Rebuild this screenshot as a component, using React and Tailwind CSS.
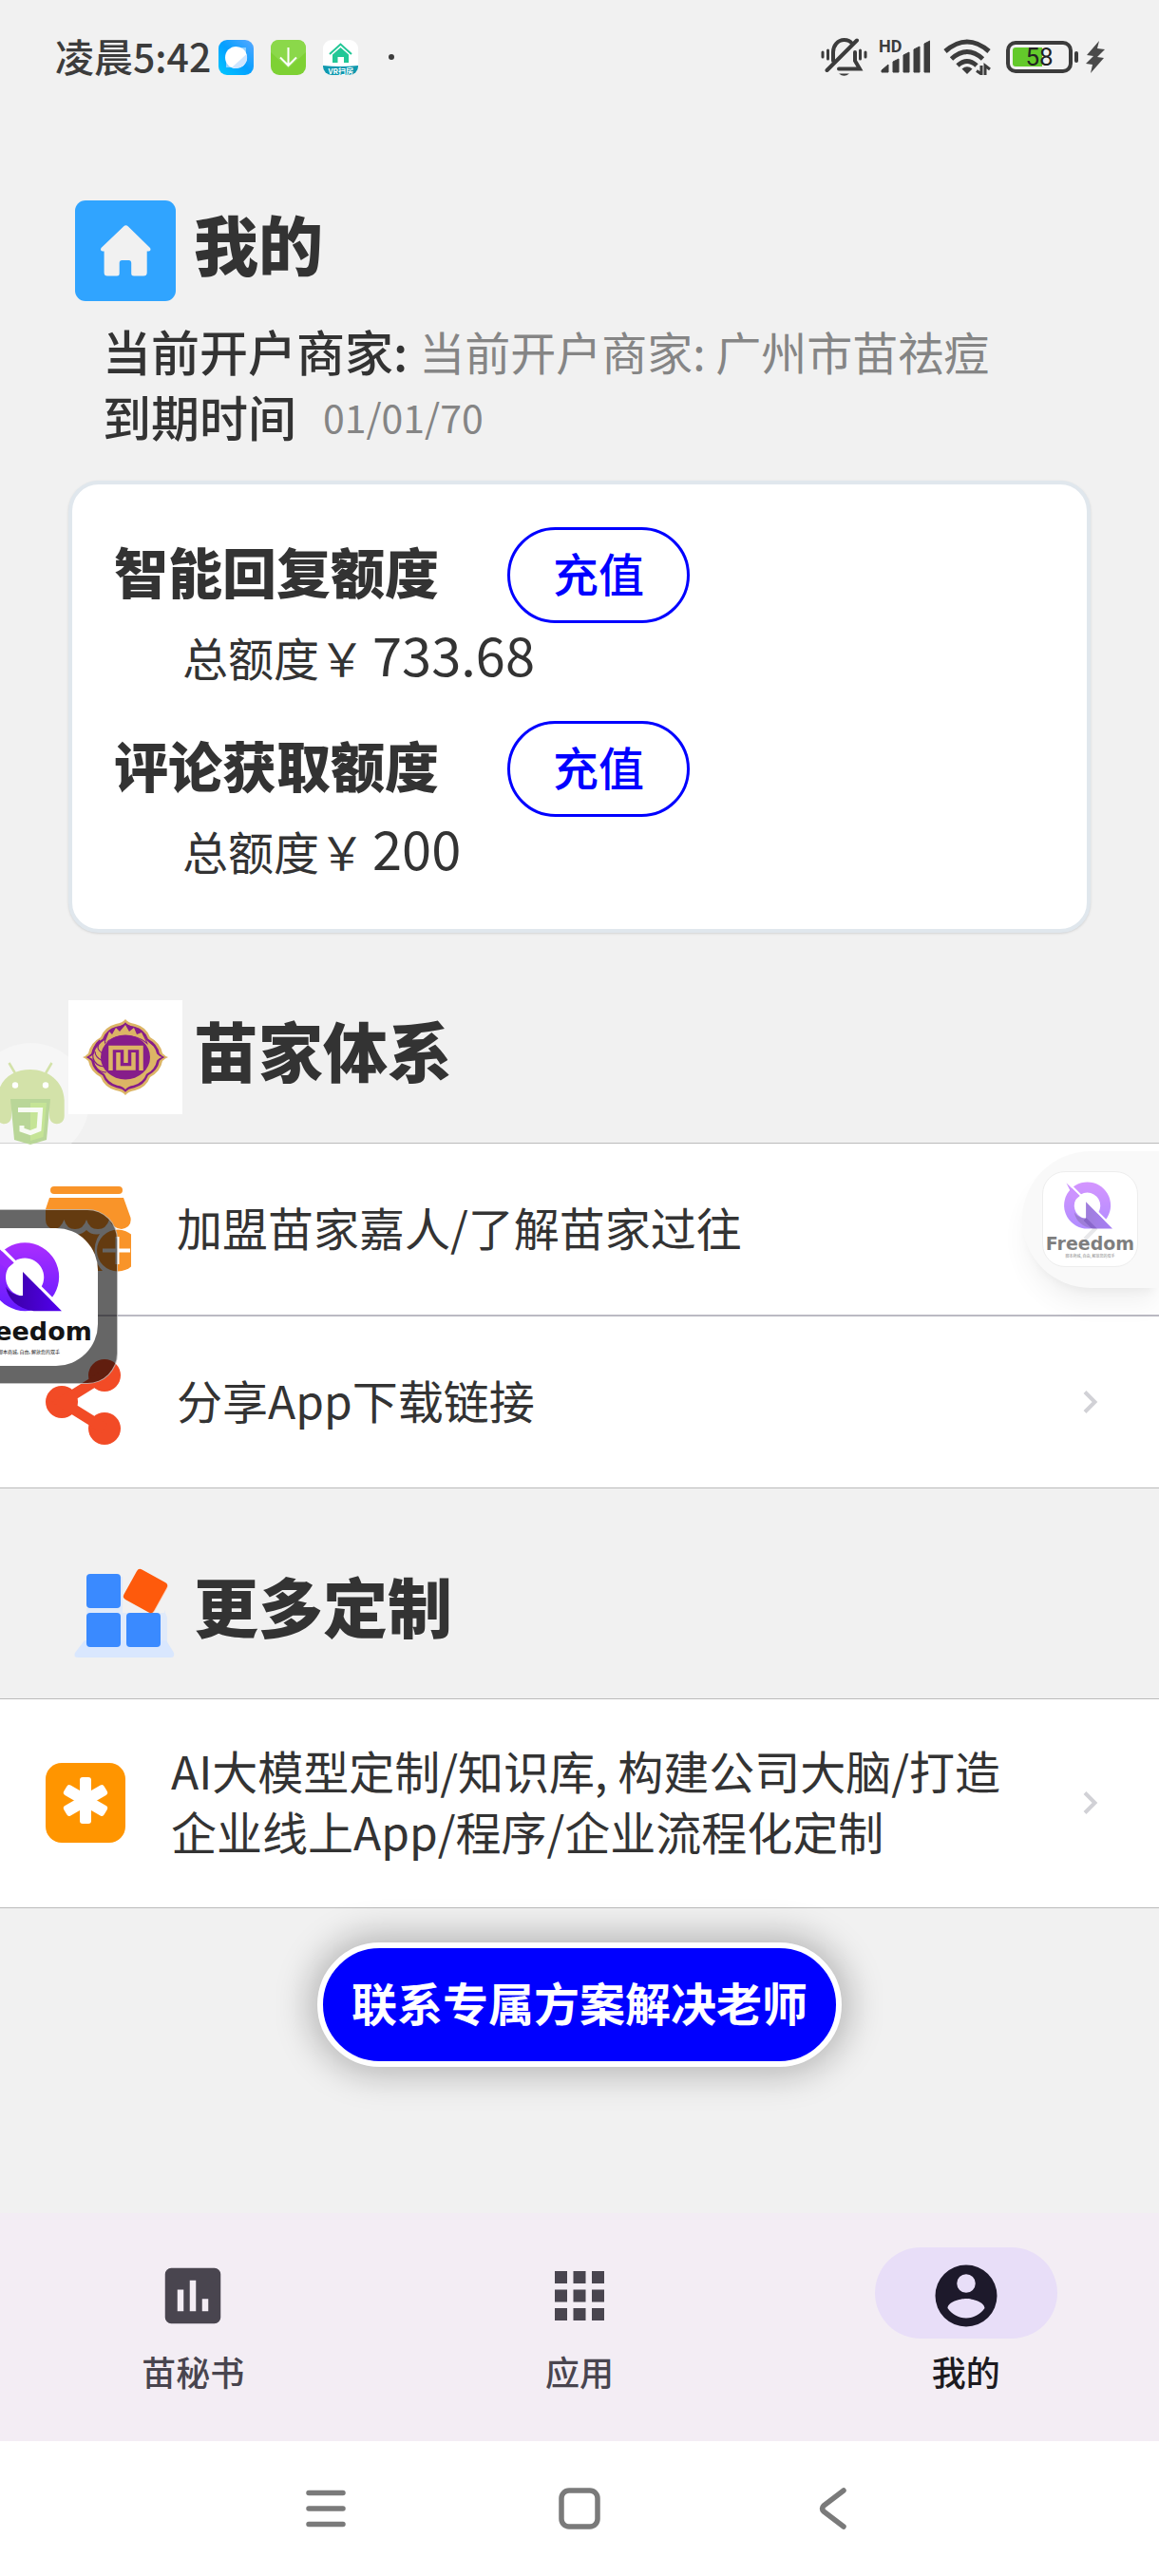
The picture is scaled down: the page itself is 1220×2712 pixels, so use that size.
import { MdAccountCircle, MdApps } from 'react-icons/md'

const GoldOutline = 'M60 20Q63 24 70 25Q82 28 86 39Q97 45 99 56Q102 59 105 60Q102 61 99 64Q97 75 86 81Q82 92 70 95Q63 96 60 100Q57 96 50 95Q38 92 34 81Q23 75 21 64Q18 61 15 60Q18 59 21 56Q23 45 34 39Q38 28 50 25Q57 24 60 20Z'

function HomeIcon() {
  return (
    <svg viewBox="0 0 106 106" className="w-[106px] h-[106px]" aria-hidden="true">
      <rect width="106" height="106" rx="11" fill="#30a4ff" />
      <path d="M51 27.5Q53.4 25 56 27.5L79 50Q80.500 53 77.500 53.500H75.700V76Q75.700 79.500 72 79.500H62Q59.200 79.500 59.200 77V66Q59.200 63 56.500 63H49.500Q46.700 63 46.700 66V77Q46.700 79.500 44 79.500H34Q30.600 79.500 30.600 76V53.500H29Q26 53 27.500 50Z" fill="#f1f1f1" />
    </svg>
  )
}

function EmblemIcon() {
  return (
    <svg viewBox="0 0 120 120" className="w-[120px] h-[120px] bg-white" aria-hidden="true">
      <path d={GoldOutline} fill="#dcb565" />
      <path d={GoldOutline} fill="#861d8a" transform="translate(60 60) scale(.92) translate(-60 -60)" />
      <path d={GoldOutline} fill="#dcb565" transform="translate(60 60) scale(.85) translate(-60 -60)" />
      <path d="M38 41Q42 29 55 27L60 25L65 27Q77 29 80 37L84 47Q74 38 60 37Q48 38 38 46Z" fill="#861d8a" />
      <path d="M39 43L43 33L46 36L50 29L54 33L60 26L64 33L69 29L72 36L77 34L82 44Q73 37 60 37Q47 37 39 45Z" fill="#dcb565" />
      <path d="M26 62Q24 49 33 42M34 44Q27 50 36 56M28 54Q28 60 36 64M26 61Q28 69 38 70M28 69Q32 76 40 76M84 43L90 48" stroke="#861d8a" strokeWidth="1.200" fill="none" />
      <ellipse cx="60" cy="60" rx="26" ry="23.500" fill="#861d8a" />
      <path d="M44.500 74V50H76.500V74M60.500 50V66M52.500 55V71.500H68.500V55" stroke="#dcb565" strokeWidth="4.500" fill="none" />
    </svg>
  )
}

function BlocksIcon() {
  return (
    <svg viewBox="0 0 120 120" className="w-[120px] h-[120px]" aria-hidden="true">
      <path d="M17 89H103L111 102Q112 107 108 107H10Q5 107 7 102Z" fill="#d9e7fe" />
      <path d="M50 22h7v38h44v-3l3 8v28H19V55h31Z" fill="#d9e7fe" opacity=".7" />
      <rect x="65" y="20" width="35" height="35" rx="4" fill="#fdcdb8" transform="rotate(29 82 37)" />
      <rect x="19" y="19" width="36" height="36" rx="4" fill="#3a8aff" />
      <rect x="19" y="60" width="36" height="36" rx="4" fill="#3a8aff" />
      <rect x="61" y="60" width="36" height="36" rx="4" fill="#3a8aff" />
      <rect x="63" y="19" width="36" height="36" rx="4" fill="#fe5a0c" transform="rotate(29 81 37)" />
    </svg>
  )
}

function ShopIcon() {
  return (
    <svg viewBox="0 0 90 90" className="w-[90px] h-[90px]" aria-hidden="true">
      <rect x="5" y="0" width="76" height="8" rx="4" fill="#f99429" />
      <path d="M4 12H82L89.500 33Q91 43 80 45Q70 44 67 35Q64 45 55 45Q46 45 43 35Q40 45 31 45Q22 45 19.500 35Q16 45 8 45Q0 43 0 35V24Z" fill="#f99429" />
      <path d="M4 50Q15 51 19.500 45Q26 52 33 51Q39 50 43 46Q49 52 57 50Q50 60 52 74Q54 83 60 89H14Q4 89 4 80Z" fill="#f99429" />
      <circle cx="76" cy="67.500" r="22" fill="#f99429" />
      <path d="M60 67.500H89M75.500 53V82" stroke="#fff" strokeWidth="4" />
    </svg>
  )
}

function ShareIcon() {
  return (
    <svg viewBox="0 0 90 90" className="w-[90px] h-[90px]" aria-hidden="true">
      <g fill="#f24b26">
        <circle cx="62" cy="17" r="17" />
        <circle cx="17" cy="45" r="17" />
        <circle cx="62" cy="73" r="17" />
      </g>
      <path d="M62 17L17 45L62 73" stroke="#f24b26" strokeWidth="11" fill="none" />
    </svg>
  )
}

function AsteriskIcon() {
  return (
    <svg viewBox="0 0 84 84" className="w-[84px] h-[84px]" aria-hidden="true">
      <rect width="84" height="84" rx="17" fill="#ff9500" />
      <g fill="#fff">
        <rect x="36" y="15" width="12" height="49" rx="3" />
        <rect x="36" y="15" width="12" height="49" rx="3" transform="rotate(60 42 39.500)" />
        <rect x="36" y="15" width="12" height="49" rx="3" transform="rotate(120 42 39.500)" />
      </g>
    </svg>
  )
}

function Chevron() {
  return (
    <svg viewBox="0 0 16 24" className="w-4 h-6 shrink-0" aria-hidden="true">
      <path d="M2 1.500L12.500 12L2 22.500" stroke="#d1d1d6" strokeWidth="4" fill="none" />
    </svg>
  )
}

function AndroidBadge() {
  return (
    <svg viewBox="0 0 94 110" className="absolute left-0 top-[45px] w-[94px] h-[110px]" aria-hidden="true">
      <circle cx="32.500" cy="61.500" r="61.500" fill="#fff" opacity=".35" />
      <path d="M9.500 21L16 32M54.500 21L48 32" stroke="#d3e2a9" strokeWidth="2.500" />
      <path d="M-3 60C-2 38 14 28 32 28S67 40 67.700 60V77C67.700 88 52 88 52 77V62H12V77C12 88 -3 88 -3 77Z" fill="#d3e2a9" />
      <circle cx="16" cy="44.500" r="3.200" fill="#fff" />
      <circle cx="48" cy="44.500" r="3.200" fill="#fff" />
      <path d="M11 59H53L49 102L32 107L15 102Z" fill="#b9d698" />
      <path d="M32 63H49L45.500 99L32 103Z" fill="#c5e496" />
      <path d="M19 70.500H42.500L41 91L32 94.500L23 91.500V87" stroke="#f8fbf4" strokeWidth="5" fill="none" />
    </svg>
  )
}

function FreedomMark({ id }) {
  return (
    <svg viewBox="0 0 101 66" className="w-full" aria-hidden="true">
      <defs>
        <linearGradient id={id + 'ring'} x1="0" y1="0" x2="0" y2="1">
          <stop offset="0" stopColor="#ab2eff" />
          <stop offset="1" stopColor="#641bff" />
        </linearGradient>
        <linearGradient id={id + 'fold'} x1="0" y1="0" x2="1" y2="0">
          <stop offset="0" stopColor="#3a00a0" />
          <stop offset="1" stopColor="#5200f0" />
        </linearGradient>
        <clipPath id={id + 'top'}><path d="M17 0H101V84Z" /></clipPath>
        <clipPath id={id + 'low'}><path d="M0 0H13.700L80 66.300H0Z" /></clipPath>
      </defs>
      <path clipPath={`url(#${id}top)`} fillRule="evenodd" fill={`url(#${id}ring)`} d="M47.500 10.700a25 25 0 1 0 .1 0ZM47.500 22a14 14 0 1 1 -.1 0Z" />
      <path clipPath={`url(#${id}low)`} fillRule="evenodd" fill={`url(#${id}ring)`} d="M47.500 10.700a25 25 0 1 0 .1 0ZM47.500 22a14 14 0 1 1 -.1 0Z" />
      <path d="M25 11.700L39.500 25.500L34 30L27 24L29 20Z" fill="#9a29ff" />
      <path d="M46 32L74.500 60.700H54C42 59 35 52 33.500 43C36 47 41 50 46 49.500Z" fill={`url(#${id}fold)`} />
    </svg>
  )
}

const quotas = [
  { title: '智能回复额度', amount: '733.68' },
  { title: '评论获取额度', amount: '200' },
]

function SectionTitle({ icon, children }) {
  return (
    <div className="relative flex items-center gap-3 pl-[72px]">
      <div className="w-[120px] h-[120px] flex items-center justify-center">{icon}</div>
      <h2 className="text-[68px] leading-[80px] font-black pb-4">{children}</h2>
    </div>
  )
}

function StatusBar() {
  return (
    <header className="h-[120px] pl-[58px] pr-[57px] flex items-center justify-between text-[#3c3c3c]">
      <div className="flex items-center">
        <span className="text-[41px] leading-[56px] font-medium pb-1">凌晨5:42</span>
        <div className="flex items-center gap-[18px] ml-2">
          <svg viewBox="0 0 37 37" className="w-[37px] h-[37px]" aria-hidden="true">
            <defs>
              <linearGradient id="planet" x1="0" y1="1" x2="1" y2="0">
                <stop offset="0" stopColor="#00c8ff" />
                <stop offset=".5" stopColor="#049fff" />
                <stop offset="1" stopColor="#5aa8ff" />
              </linearGradient>
            </defs>
            <rect width="37" height="37" rx="9" fill="url(#planet)" />
            <path d="M8 17V29H18ZM19 8H29V19Z" fill="#8fd0ff" />
            <circle cx="18.500" cy="18.500" r="11.500" fill="#fff" />
            <path d="M29.500 15A11.500 11.500 0 0 1 14 29Z" fill="#cfe6ff" />
          </svg>
          <svg viewBox="0 0 37 37" className="w-[37px] h-[37px]" aria-hidden="true">
            <rect width="37" height="37" rx="9" fill="#7ed134" />
            <path d="M0 13V9Q0 0 9 0H28Q37 0 37 9V13L18.500 30Z" fill="#8bd84a" />
            <path d="M18.500 8V27M10 18.500L18.500 27L27 18.500" stroke="#fff" strokeWidth="2" fill="none" />
          </svg>
          <div className="relative w-[37px] h-[37px] rounded-[9px] bg-white overflow-hidden">
            <svg viewBox="0 0 37 37" aria-hidden="true">
              <path d="M7 15L18.500 4.500L30 15" stroke="#22c796" strokeWidth="2" fill="none" />
              <path d="M18.500 8L27 15.500V24H22V18H15.500V24H10V15.500Z" fill="#22c796" />
              <path d="M0 27Q18 29 37 27V37H0Z" fill="#0f98ae" />
            </svg>
            <span className="absolute bottom-0 inset-x-0 text-center text-[8px] leading-[9px] font-bold text-white">VR扫房</span>
          </div>
        </div>
        <span className="w-1.5 h-1.5 rounded-full bg-[#3c3c3c] ml-8" />
      </div>

      <div className="flex items-center">
        <svg viewBox="0 0 49 41" className="w-[49px] h-[41px] mr-3" fill="none" stroke="#3c3c3c" strokeWidth="4" strokeLinecap="round" aria-hidden="true">
          <path d="M13 24V15C13 8 18 2 24.500 2C28 2 31 3 33 6M36 15V24L41 32.500H19" />
          <path d="M6.500 34L38 2.500" />
          <path d="M7.500 13V22M2 15V20M41.500 13V22M47 15V20" strokeWidth="3" />
          <path d="M19 37.500H30Q24.500 42 19 37.500Z" fill="#3c3c3c" stroke="none" />
        </svg>
        <div className="relative mr-3.5">
          <svg viewBox="0 0 54 36" className="w-[54px] h-9" fill="#3c3c3c" aria-hidden="true">
            <path d="M3 32L10 26V34H3ZM15 23L21 20V34H15ZM26 16L32 13V34H26ZM37 10L43 7V34H37ZM48 4L54 1V34H48Z" stroke="#3c3c3c" strokeLinejoin="round" />
          </svg>
          <span className="absolute left-0 top-0 text-[18px] leading-[14px] font-bold font-['Roboto',sans-serif]">HD</span>
        </div>
        <svg viewBox="0 0 50 38" className="w-[50px] h-[38px] mr-4" fill="none" stroke="#3c3c3c" strokeWidth="5" aria-hidden="true">
          <path d="M2 13Q25 -7 48 13M8.500 21Q25 6 41.500 21M15 28Q25 19 35 28" />
          <path d="M25 37L19.500 31.500Q25 27 30.500 31.500Z" fill="#3c3c3c" stroke="none" />
          <path d="M40 28V37L35 33.500M44 38V28L49 32" strokeWidth="3" />
        </svg>
        <div className="flex items-center">
          <div className="relative w-[70px] h-[34px] border-4 border-[#3c3c3c] rounded-[10px] p-[3px]">
            <div className="w-[31px] h-full bg-[#63c92b] rounded-l-[3px]" />
            <span className="absolute inset-0 text-center text-[26px] leading-[26px] text-[#222] font-['Roboto',sans-serif]">58</span>
          </div>
          <div className="w-1 h-3 rounded-[2px] bg-[#3c3c3c] ml-0.5" />
        </div>
        <svg viewBox="0 0 20 34" className="w-5 h-[34px] ml-2" aria-hidden="true">
          <path d="M14 0L1 15L8 16L0 24L7 25L5 34L19 18L12 17L20 9L12 8Z" fill="#4a4a4a" />
        </svg>
      </div>
    </header>
  )
}

export default function App() {
  return (
    <div className="min-h-screen flex flex-col bg-[#f1f1f1] text-[#333] font-['Noto_Sans_CJK_SC',sans-serif] overflow-x-hidden">
      <StatusBar />

      <main className="flex-1 pt-[84px]">
        {/* Account */}
        <section>
          <SectionTitle icon={<HomeIcon />}>我的</SectionTitle>
          <dl className="mt-[11px] pl-[108px] leading-[69px]">
            <div className="flex items-center">
              <dt className="text-[51px] font-medium">当前开户商家:</dt>
              <dd className="text-[48px] text-[#858585] ml-3">当前开户商家: 广州市苗祛痘</dd>
            </div>
            <div className="flex items-center">
              <dt className="text-[51px] font-medium">到期时间</dt>
              <dd className="text-[41px] text-[#858585] ml-7">01/01/70</dd>
            </div>
          </dl>
        </section>

        {/* Quota card */}
        <section className="mt-[33px] mx-[72px] bg-white border-4 border-[#e0e7ed] rounded-[32px] shadow-sm pt-[45px] pb-[54px] pl-11">
          <div className="flex flex-col gap-[39px]">
            {quotas.map((q) => (
              <div key={q.title}>
                <div className="flex items-center gap-[72px]">
                  <h3 className="text-[57px] leading-[72px] font-black pb-3">{q.title}</h3>
                  <button className="w-[192px] h-[101px] border-3 border-[#0000ff] rounded-full text-[48px] leading-[64px] font-medium text-[#0000ff] pb-2">
                    充值
                  </button>
                </div>
                <p className="h-16 pl-[72px] text-[48px] leading-[64px] flex items-baseline gap-2">
                  总额度￥<span className="text-[56px]">{q.amount}</span>
                </p>
              </div>
            ))}
          </div>
        </section>

        {/* Miao family */}
        <section className="relative mt-[71px]">
          <AndroidBadge />
          <SectionTitle icon={<EmblemIcon />}>苗家体系</SectionTitle>
          <div className="mt-[30px] bg-white border-y border-[#bbb] divide-y-2 divide-[#bbbac3] text-[48px] leading-[64px]">
            <a href="#join" className="h-[182px] flex items-center gap-12 pl-12 pr-16">
              <ShopIcon />
              <span className="flex-1 pb-1.5">加盟苗家嘉人/了解苗家过往</span>
              <Chevron />
            </a>
            <a href="#share" className="h-[180px] flex items-center gap-12 pl-12 pr-16">
              <ShareIcon />
              <span className="flex-1 pb-1.5">分享App下载链接</span>
              <Chevron />
            </a>
          </div>

          {/* Floating windows docked to the screen edges */}
          <div className="absolute left-0 top-[220px] w-[124px] h-[184px] bg-black/60 rounded-r-[32px] border-y border-r border-white/60 py-[19px]">
            <div className="w-[103px] h-[145px] bg-white rounded-r-[44px] overflow-hidden">
              <div className="w-[145px] -ml-[42px] text-center text-[#141414]">
                <FreedomMark id="left" />
                <div className="text-[27px] leading-[28px] font-bold font-['DejaVu_Sans',sans-serif]">Freedom</div>
                <div className="text-[5px] leading-[10px] mt-0.5">脚本商城, 自由, 解放您的双手</div>
              </div>
            </div>
          </div>
          <div className="absolute right-0 top-[159px] w-[144px] h-[144px] p-[21px] bg-[#f5f5f5] rounded-l-full shadow-xl opacity-50">
            <div className="w-[101px] h-[101px] bg-white border border-[#ddd] rounded-[24px] text-center text-black">
              <FreedomMark id="right" />
              <div className="text-[19px] leading-[20px] font-bold font-['DejaVu_Sans',sans-serif]">Freedom</div>
              <div className="text-[4px] leading-[6px]">脚本商城, 自由, 解放您的双手</div>
            </div>
          </div>
        </section>

        {/* Custom work */}
        <section className="mt-[71px]">
          <SectionTitle icon={<BlocksIcon />}>更多定制</SectionTitle>
          <div className="mt-[30px] bg-white border-y border-[#bbb] text-[48px] leading-[64px]">
            <a href="#custom" className="flex items-center gap-12 pl-12 pr-16 pt-[42px] pb-[43px]">
              <AsteriskIcon />
              <span className="flex-1 pr-8 pb-1.5">AI大模型定制/知识库, 构建公司大脑/打造企业线上App/程序/企业流程化定制</span>
              <Chevron />
            </a>
          </div>
        </section>

        <div className="mt-9 flex justify-center">
          <button className="px-[30px] h-[131px] bg-[#0000ff] border-6 border-white rounded-full text-[48px] leading-[64px] font-bold text-white pb-2 shadow-[0_0_36px_8px_rgba(0,0,0,0.25)]">
            联系专属方案解决老师
          </button>
        </div>
      </main>

      {/* Bottom tabs */}
      <nav className="grid grid-cols-3 bg-[#f3edf4] pt-9 pb-[50px] text-[36px] leading-[48px] font-medium text-[#49454f]">
        <button className="flex flex-col items-center gap-2.5">
          <span className="w-[192px] h-24 flex items-center justify-center pt-1.5">
            <svg viewBox="0 0 24 24" className="w-[78px] h-[78px]" fill="currentColor" aria-hidden="true">
              <path d="M5 3H19A2 2 0 0 1 21 5V19A2 2 0 0 1 19 21H5A2 2 0 0 1 3 19V5A2 2 0 0 1 5 3ZM7 10V17H9V10ZM11 7V17H13V7ZM15 13V17H17V13Z" fillRule="evenodd" />
            </svg>
          </span>
          苗秘书
        </button>
        <button className="flex flex-col items-center gap-2.5">
          <span className="w-[192px] h-24 flex items-center justify-center pt-1.5">
            <MdApps className="w-[78px] h-[78px]" />
          </span>
          应用
        </button>
        <button className="flex flex-col items-center gap-2.5 text-[#1d1b20]">
          <span className="w-[192px] h-24 flex items-center justify-center pt-1.5 rounded-full bg-[#e8def8] text-[#1d192b]">
            <svg viewBox="0 0 24 24" className="w-[78px] h-[78px]" fill="currentColor" aria-hidden="true">
              <path fillRule="evenodd" d="M12 2A10 10 0 1 1 12 22A10 10 0 1 1 12 2ZM12 5A3 3 0 1 0 12 11A3 3 0 1 0 12 5ZM12 19.200C14.500 19.200 16.700 17.900 18 16C17.970 14 14 12.900 12 12.900C9.990 12.900 6.030 14 6 16C7.300 17.900 9.500 19.200 12 19.200Z" />
            </svg>
          </span>
          我的
        </button>
      </nav>

      {/* System navigation */}
      <div className="h-[142px] bg-white px-[210px] grid grid-cols-3 items-center justify-items-center">
        <button aria-label="菜单">
          <svg viewBox="0 0 46 46" className="w-[46px] h-[46px]" fill="none" stroke="#7a7a7a" strokeWidth="5.500" strokeLinecap="round">
            <path d="M5 6.500H41M5 23H41M5 39.500H41" />
          </svg>
        </button>
        <button aria-label="主页">
          <svg viewBox="0 0 46 46" className="w-[46px] h-[46px]" fill="none" stroke="#7a7a7a" strokeWidth="5.500">
            <rect x="4" y="4" width="38" height="38" rx="8" />
          </svg>
        </button>
        <button aria-label="返回">
          <svg viewBox="0 0 46 46" className="w-[46px] h-[46px]" fill="none" stroke="#7a7a7a" strokeWidth="5.500" strokeLinecap="round" strokeLinejoin="round">
            <path d="M34 4L13 20Q10 23 13 26L34 42" />
          </svg>
        </button>
      </div>
    </div>
  )
}
